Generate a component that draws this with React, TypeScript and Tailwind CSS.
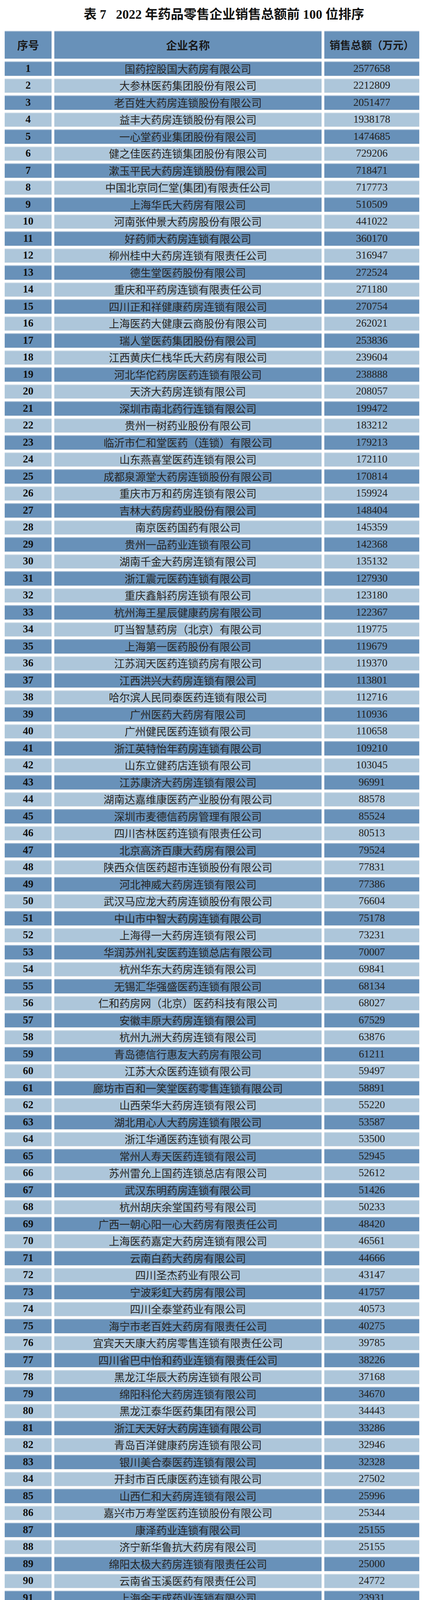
import React from "react";

const rows: [string, string][] = [
  ["国药控股国大药房有限公司", "2577658"],
  ["大参林医药集团股份有限公司", "2212809"],
  ["老百姓大药房连锁股份有限公司", "2051477"],
  ["益丰大药房连锁股份有限公司", "1938178"],
  ["一心堂药业集团股份有限公司", "1474685"],
  ["健之佳医药连锁集团股份有限公司", "729206"],
  ["漱玉平民大药房连锁股份有限公司", "718471"],
  ["中国北京同仁堂(集团)有限责任公司", "717773"],
  ["上海华氏大药房有限公司", "510509"],
  ["河南张仲景大药房股份有限公司", "441022"],
  ["好药师大药房连锁有限公司", "360170"],
  ["柳州桂中大药房连锁有限责任公司", "316947"],
  ["德生堂医药股份有限公司", "272524"],
  ["重庆和平药房连锁有限责任公司", "271180"],
  ["四川正和祥健康药房连锁有限公司", "270754"],
  ["上海医药大健康云商股份有限公司", "262021"],
  ["瑞人堂医药集团股份有限公司", "253836"],
  ["江西黄庆仁栈华氏大药房有限公司", "239604"],
  ["河北华佗药房医药连锁有限公司", "238888"],
  ["天济大药房连锁有限公司", "208057"],
  ["深圳市南北药行连锁有限公司", "199472"],
  ["贵州一树药业股份有限公司", "183212"],
  ["临沂市仁和堂医药（连锁）有限公司", "179213"],
  ["山东燕喜堂医药连锁有限公司", "172110"],
  ["成都泉源堂大药房连锁股份有限公司", "170814"],
  ["重庆市万和药房连锁有限公司", "159924"],
  ["吉林大药房药业股份有限公司", "148404"],
  ["南京医药国药有限公司", "145359"],
  ["贵州一品药业连锁有限公司", "142368"],
  ["湖南千金大药房连锁有限公司", "135132"],
  ["浙江震元医药连锁有限公司", "127930"],
  ["重庆鑫斛药房连锁有限公司", "123180"],
  ["杭州海王星辰健康药房有限公司", "122367"],
  ["叮当智慧药房（北京）有限公司", "119775"],
  ["上海第一医药股份有限公司", "119679"],
  ["江苏润天医药连锁药房有限公司", "119370"],
  ["江西洪兴大药房连锁有限公司", "113801"],
  ["哈尔滨人民同泰医药连锁有限公司", "112716"],
  ["广州医药大药房有限公司", "110936"],
  ["广州健民医药连锁有限公司", "110658"],
  ["浙江英特怡年药房连锁有限公司", "109210"],
  ["山东立健药店连锁有限公司", "103045"],
  ["江苏康济大药房连锁有限公司", "96991"],
  ["湖南达嘉维康医药产业股份有限公司", "88578"],
  ["深圳市麦德信药房管理有限公司", "85524"],
  ["四川杏林医药连锁有限责任公司", "80513"],
  ["北京高济百康大药房有限公司", "79524"],
  ["陕西众信医药超市连锁股份有限公司", "77831"],
  ["河北神威大药房连锁有限公司", "77386"],
  ["武汉马应龙大药房连锁股份有限公司", "76604"],
  ["中山市中智大药房连锁有限公司", "75178"],
  ["上海得一大药房连锁有限公司", "73231"],
  ["华润苏州礼安医药连锁总店有限公司", "70007"],
  ["杭州华东大药房连锁有限公司", "69841"],
  ["无锡汇华强盛医药连锁有限公司", "68134"],
  ["仁和药房网（北京）医药科技有限公司", "68027"],
  ["安徽丰原大药房连锁有限公司", "67529"],
  ["杭州九洲大药房连锁有限公司", "63876"],
  ["青岛德信行惠友大药房有限公司", "61211"],
  ["江苏大众医药连锁有限公司", "59497"],
  ["廊坊市百和一笑堂医药零售连锁有限公司", "58891"],
  ["山西荣华大药房连锁有限公司", "55220"],
  ["湖北用心人大药房连锁有限公司", "53587"],
  ["浙江华通医药连锁有限公司", "53500"],
  ["常州人寿天医药连锁有限公司", "52945"],
  ["苏州雷允上国药连锁总店有限公司", "52612"],
  ["武汉东明药房连锁有限公司", "51426"],
  ["杭州胡庆余堂国药号有限公司", "50233"],
  ["广西一朝心阳一心大药房有限责任公司", "48420"],
  ["上海医药嘉定大药房连锁有限公司", "46561"],
  ["云南白药大药房有限公司", "44666"],
  ["四川圣杰药业有限公司", "43147"],
  ["宁波彩虹大药房有限公司", "41757"],
  ["四川全泰堂药业有限公司", "40573"],
  ["海宁市老百姓大药房有限责任公司", "40275"],
  ["宜宾天天康大药房零售连锁有限责任公司", "39785"],
  ["四川省巴中怡和药业连锁有限责任公司", "38226"],
  ["黑龙江华辰大药房连锁有限公司", "37168"],
  ["绵阳科伦大药房连锁有限公司", "34670"],
  ["黑龙江泰华医药集团有限公司", "34443"],
  ["浙江天天好大药房连锁有限公司", "33286"],
  ["青岛百洋健康药房连锁有限公司", "32946"],
  ["银川美合泰医药连锁有限公司", "32328"],
  ["开封市百氏康医药连锁有限公司", "27502"],
  ["山西仁和大药房连锁有限公司", "25996"],
  ["嘉兴市万寿堂医药连锁股份有限公司", "25344"],
  ["康泽药业连锁有限公司", "25155"],
  ["济宁新华鲁抗大药房有限公司", "25155"],
  ["绵阳太极大药房连锁有限责任公司", "25000"],
  ["云南省玉溪医药有限责任公司", "24772"],
  ["上海余天成药业连锁有限公司", "23931"],
  ["江西省萍乡市昌盛大药房连锁有限公司", "22510"],
  ["四川麦德凯大药房有限公司", "22306"],
  ["易心堂大药房连锁股份有限公司", "22278"],
  ["广西梧州百姓大药房连锁有限公司", "21044"],
  ["山东德信堂医药连锁有限公司", "20542"],
  ["义乌市三溪堂国药馆连锁有限公司", "20371"],
  ["四川高济康健堂医药连锁有限公司", "19369"],
  ["上海南汇华泰药店连锁总店", "19335"],
  ["四平神农大药房连锁股份有限公司", "18254"],
];

const serif = "font-['Liberation_Serif','Noto_Sans_CJK_SC',serif]";

function Cell({ dark, className, children }: { dark: boolean; className?: string; children: React.ReactNode }) {
  return (
    <div
      className={
        "min-h-0 overflow-hidden leading-none flex items-center justify-center shadow-[inset_0_2px_1px_rgba(255,255,255,0.45),0_1px_1px_rgba(0,0,0,0.08)] " +
        (dark ? "bg-[#6891b9] " : "bg-[#adc6da] ") +
        (className ?? "")
      }
    >
      {children}
    </div>
  );
}

export default function App() {
  return (
    <div className="w-[1080px] h-[4556px] overflow-hidden bg-white text-[#1f1f1f] leading-none">
      <div className="h-[79px] flex items-center justify-center pb-[4px] pl-[66px]">
        <h1 className="font-['Liberation_Serif','Noto_Sans_CJK_SC',serif] font-bold text-[33px] leading-none text-[#111]">
          表 7&nbsp;&nbsp;&nbsp;2022 年药品零售企业销售总额前 100 位排序
        </h1>
      </div>
      <div className="pl-[12px] pr-[7px] flex flex-col gap-[7px]">
        <div className="grid grid-cols-[120px_684px_243px] grid-rows-[71px] gap-x-[7px] h-[71px] shrink-0">
          <Cell dark={true} className="font-['Noto_Sans_CJK_SC',sans-serif] font-bold text-[28px] text-[#1a1a1a]">序号</Cell>
          <Cell dark={true} className="font-['Noto_Sans_CJK_SC',sans-serif] font-bold text-[28px] text-[#1a1a1a]">企业名称</Cell>
          <Cell dark={true} className="font-['Noto_Sans_CJK_SC',sans-serif] font-bold text-[27px] text-[#1a1a1a]">销售总额（万元）</Cell>
        </div>
        {rows.map(([name, amount], i) => {
          const dark = i % 2 === 0;
          return (
            <div key={i} className="grid grid-cols-[120px_684px_243px] grid-rows-[36.5px] gap-x-[7px] h-[36.5px] shrink-0">
              <Cell dark={dark} className={serif + " font-bold text-[27px] text-[#111]"}>{i + 1}</Cell>
              <Cell dark={dark} className="font-['Noto_Sans_CJK_SC',sans-serif] font-normal text-[27px] text-[#262626]">{name}</Cell>
              <Cell dark={dark} className={serif + " text-[27px] text-[#222]"}>{amount}</Cell>
            </div>
          );
        })}
      </div>
    </div>
  );
}
